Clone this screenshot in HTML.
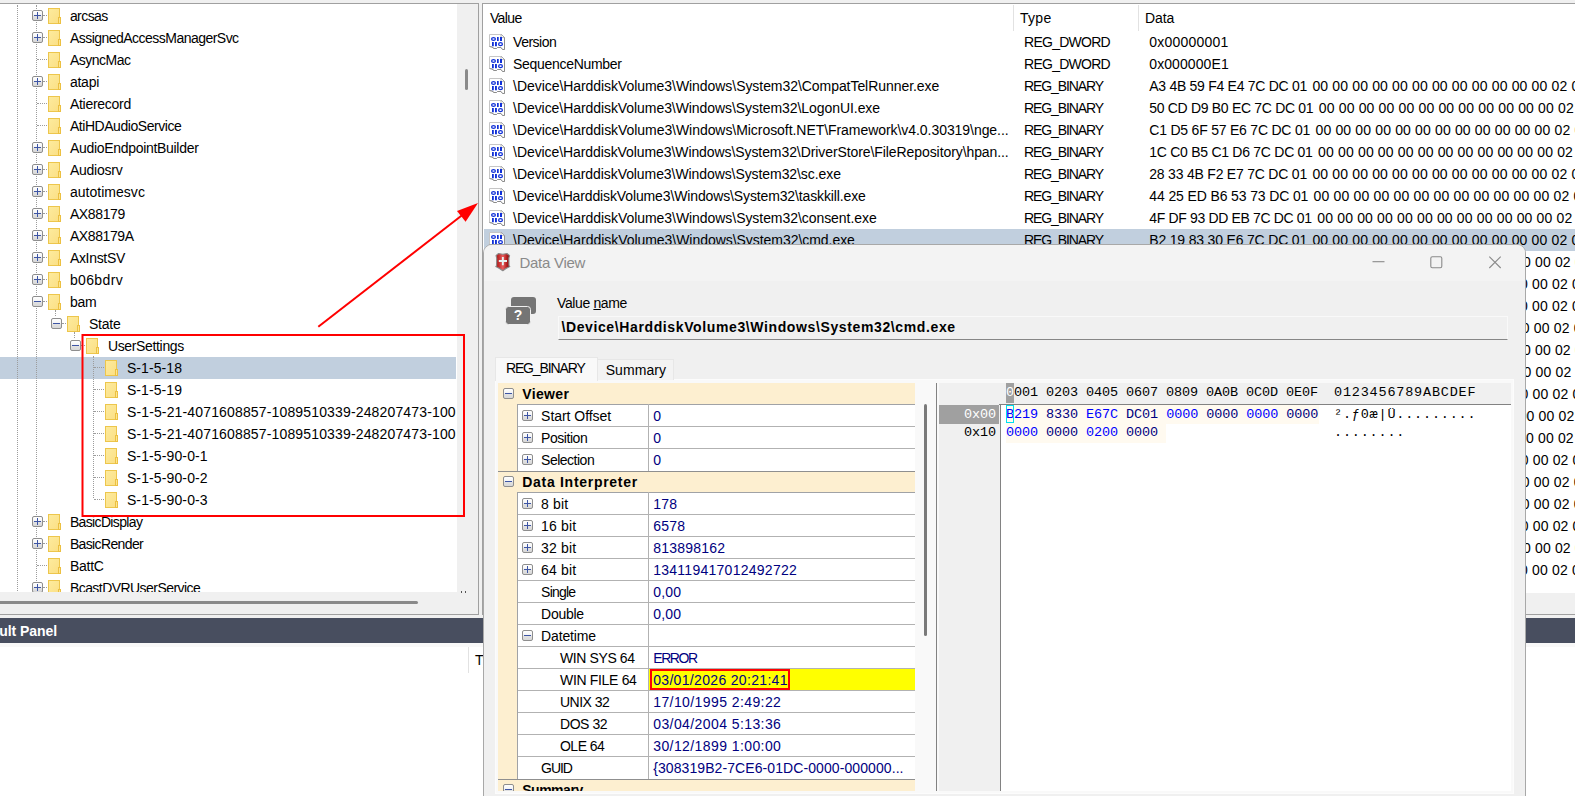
<!DOCTYPE html><html><head><meta charset="utf-8"><title>Data View</title><style>
*{box-sizing:border-box;margin:0;padding:0}
html,body{width:1575px;height:796px;overflow:hidden}
body{position:relative;background:#f0f0f0;font:14px "Liberation Sans",sans-serif;color:#000}
.a{position:absolute}
.t{position:absolute;white-space:pre;line-height:22px;height:22px}
.fold{position:absolute;width:13px;height:16px}
.box{position:absolute;width:11px;height:11px;border:1px solid #8e8e8e;border-radius:2px;background:linear-gradient(#fefefe 0%,#f3f3f3 48%,#e2e2e2 52%,#d8d8d8 100%)}
.box i{position:absolute;left:1px;top:4px;width:7px;height:1px;background:#3d55a5}
.box b{position:absolute;left:4px;top:1px;width:1px;height:7px;background:#3d55a5}
.hd{position:absolute;height:0;border-top:1px dotted #9c9c9c}
.vd{position:absolute;width:0;border-left:1px dotted #9c9c9c}
.ico{position:absolute;width:16px;height:16px}
.mono{font:13.5px "Liberation Mono",monospace;letter-spacing:-0.1px;white-space:pre;position:absolute;line-height:19px;height:19px}
</style></head><body>
<svg width="0" height="0" style="position:absolute"><defs>
<linearGradient id="fg" x1="0" y1="0" x2="1" y2="1"><stop offset="0" stop-color="#fdeb9e"/><stop offset="1" stop-color="#fbdf84"/></linearGradient>
</defs></svg>
<div class="a" style="left:0;top:3px;width:479px;height:612px;border:1px solid #a0a0a0;border-left:0;background:#f0f0f0"></div>
<div class="a" style="left:0;top:4px;width:457px;height:588px;background:#fff;overflow:hidden">
<div class="a" style="left:0px;top:353px;width:456px;height:22px;background:#c1cfde;"></div>
<div class="vd" style="left:17px;top:1px;height:588px"></div>
<div class="vd" style="left:36px;top:1px;height:588px"></div>
<div class="vd" style="left:55px;top:306px;height:6px"></div>
<div class="vd" style="left:74px;top:328px;height:6px"></div>
<div class="vd" style="left:93px;top:352px;height:142px"></div>
<div class="hd" style="left:43px;top:11px;width:4px"></div>
<div class="box" style="left:32px;top:6px"><i></i><b></b></div>
<svg class="fold" style="left:48px;top:4px" viewBox="0 0 13 16"><rect x="0.5" y="0.5" width="11" height="15" fill="url(#fg)" stroke="#edc64c"/><rect x="10.5" y="9.5" width="2" height="6" fill="#fde68f" stroke="#ecc042"/></svg>
<div class="t" style="left:69.90px;top:1.00px;letter-spacing:-0.570px;">arcsas</div>
<div class="hd" style="left:43px;top:33px;width:4px"></div>
<div class="box" style="left:32px;top:28px"><i></i><b></b></div>
<svg class="fold" style="left:48px;top:26px" viewBox="0 0 13 16"><rect x="0.5" y="0.5" width="11" height="15" fill="url(#fg)" stroke="#edc64c"/><rect x="10.5" y="9.5" width="2" height="6" fill="#fde68f" stroke="#ecc042"/></svg>
<div class="t" style="left:69.90px;top:23.00px;letter-spacing:-0.526px;">AssignedAccessManagerSvc</div>
<div class="hd" style="left:37px;top:55px;width:10px"></div>
<svg class="fold" style="left:48px;top:48px" viewBox="0 0 13 16"><rect x="0.5" y="0.5" width="11" height="15" fill="url(#fg)" stroke="#edc64c"/><rect x="10.5" y="9.5" width="2" height="6" fill="#fde68f" stroke="#ecc042"/></svg>
<div class="t" style="left:69.90px;top:45.00px;letter-spacing:-0.507px;">AsyncMac</div>
<div class="hd" style="left:43px;top:77px;width:4px"></div>
<div class="box" style="left:32px;top:72px"><i></i><b></b></div>
<svg class="fold" style="left:48px;top:70px" viewBox="0 0 13 16"><rect x="0.5" y="0.5" width="11" height="15" fill="url(#fg)" stroke="#edc64c"/><rect x="10.5" y="9.5" width="2" height="6" fill="#fde68f" stroke="#ecc042"/></svg>
<div class="t" style="left:69.90px;top:67.00px;letter-spacing:-0.238px;">atapi</div>
<div class="hd" style="left:37px;top:99px;width:10px"></div>
<svg class="fold" style="left:48px;top:92px" viewBox="0 0 13 16"><rect x="0.5" y="0.5" width="11" height="15" fill="url(#fg)" stroke="#edc64c"/><rect x="10.5" y="9.5" width="2" height="6" fill="#fde68f" stroke="#ecc042"/></svg>
<div class="t" style="left:69.90px;top:89.00px;letter-spacing:-0.267px;">Atierecord</div>
<div class="hd" style="left:37px;top:121px;width:10px"></div>
<svg class="fold" style="left:48px;top:114px" viewBox="0 0 13 16"><rect x="0.5" y="0.5" width="11" height="15" fill="url(#fg)" stroke="#edc64c"/><rect x="10.5" y="9.5" width="2" height="6" fill="#fde68f" stroke="#ecc042"/></svg>
<div class="t" style="left:69.90px;top:111.00px;letter-spacing:-0.447px;">AtiHDAudioService</div>
<div class="hd" style="left:43px;top:143px;width:4px"></div>
<div class="box" style="left:32px;top:138px"><i></i><b></b></div>
<svg class="fold" style="left:48px;top:136px" viewBox="0 0 13 16"><rect x="0.5" y="0.5" width="11" height="15" fill="url(#fg)" stroke="#edc64c"/><rect x="10.5" y="9.5" width="2" height="6" fill="#fde68f" stroke="#ecc042"/></svg>
<div class="t" style="left:69.90px;top:133.00px;letter-spacing:-0.303px;">AudioEndpointBuilder</div>
<div class="hd" style="left:43px;top:165px;width:4px"></div>
<div class="box" style="left:32px;top:160px"><i></i><b></b></div>
<svg class="fold" style="left:48px;top:158px" viewBox="0 0 13 16"><rect x="0.5" y="0.5" width="11" height="15" fill="url(#fg)" stroke="#edc64c"/><rect x="10.5" y="9.5" width="2" height="6" fill="#fde68f" stroke="#ecc042"/></svg>
<div class="t" style="left:69.90px;top:155.00px;letter-spacing:-0.236px;">Audiosrv</div>
<div class="hd" style="left:43px;top:187px;width:4px"></div>
<div class="box" style="left:32px;top:182px"><i></i><b></b></div>
<svg class="fold" style="left:48px;top:180px" viewBox="0 0 13 16"><rect x="0.5" y="0.5" width="11" height="15" fill="url(#fg)" stroke="#edc64c"/><rect x="10.5" y="9.5" width="2" height="6" fill="#fde68f" stroke="#ecc042"/></svg>
<div class="t" style="left:69.90px;top:177.00px;letter-spacing:0.030px;">autotimesvc</div>
<div class="hd" style="left:43px;top:209px;width:4px"></div>
<div class="box" style="left:32px;top:204px"><i></i><b></b></div>
<svg class="fold" style="left:48px;top:202px" viewBox="0 0 13 16"><rect x="0.5" y="0.5" width="11" height="15" fill="url(#fg)" stroke="#edc64c"/><rect x="10.5" y="9.5" width="2" height="6" fill="#fde68f" stroke="#ecc042"/></svg>
<div class="t" style="left:69.90px;top:199.00px;letter-spacing:-0.367px;">AX88179</div>
<div class="hd" style="left:43px;top:231px;width:4px"></div>
<div class="box" style="left:32px;top:226px"><i></i><b></b></div>
<svg class="fold" style="left:48px;top:224px" viewBox="0 0 13 16"><rect x="0.5" y="0.5" width="11" height="15" fill="url(#fg)" stroke="#edc64c"/><rect x="10.5" y="9.5" width="2" height="6" fill="#fde68f" stroke="#ecc042"/></svg>
<div class="t" style="left:69.90px;top:221.00px;letter-spacing:-0.407px;">AX88179A</div>
<div class="hd" style="left:43px;top:253px;width:4px"></div>
<div class="box" style="left:32px;top:248px"><i></i><b></b></div>
<svg class="fold" style="left:48px;top:246px" viewBox="0 0 13 16"><rect x="0.5" y="0.5" width="11" height="15" fill="url(#fg)" stroke="#edc64c"/><rect x="10.5" y="9.5" width="2" height="6" fill="#fde68f" stroke="#ecc042"/></svg>
<div class="t" style="left:69.90px;top:243.00px;letter-spacing:-0.314px;">AxInstSV</div>
<div class="hd" style="left:43px;top:275px;width:4px"></div>
<div class="box" style="left:32px;top:270px"><i></i><b></b></div>
<svg class="fold" style="left:48px;top:268px" viewBox="0 0 13 16"><rect x="0.5" y="0.5" width="11" height="15" fill="url(#fg)" stroke="#edc64c"/><rect x="10.5" y="9.5" width="2" height="6" fill="#fde68f" stroke="#ecc042"/></svg>
<div class="t" style="left:69.90px;top:265.00px;letter-spacing:0.367px;">b06bdrv</div>
<div class="hd" style="left:43px;top:297px;width:4px"></div>
<div class="box" style="left:32px;top:292px"><i></i></div>
<svg class="fold" style="left:48px;top:290px" viewBox="0 0 13 16"><rect x="0.5" y="0.5" width="11" height="15" fill="url(#fg)" stroke="#edc64c"/><rect x="10.5" y="9.5" width="2" height="6" fill="#fde68f" stroke="#ecc042"/></svg>
<div class="t" style="left:69.90px;top:287.00px;letter-spacing:-0.225px;">bam</div>
<div class="hd" style="left:62px;top:319px;width:4px"></div>
<div class="box" style="left:51px;top:314px"><i></i></div>
<svg class="fold" style="left:67px;top:312px" viewBox="0 0 13 16"><rect x="0.5" y="0.5" width="11" height="15" fill="url(#fg)" stroke="#edc64c"/><rect x="10.5" y="9.5" width="2" height="6" fill="#fde68f" stroke="#ecc042"/></svg>
<div class="t" style="left:88.90px;top:309.00px;letter-spacing:-0.200px;">State</div>
<div class="hd" style="left:81px;top:341px;width:4px"></div>
<div class="box" style="left:70px;top:336px"><i></i></div>
<svg class="fold" style="left:86px;top:334px" viewBox="0 0 13 16"><rect x="0.5" y="0.5" width="11" height="15" fill="url(#fg)" stroke="#edc64c"/><rect x="10.5" y="9.5" width="2" height="6" fill="#fde68f" stroke="#ecc042"/></svg>
<div class="t" style="left:107.90px;top:331.00px;letter-spacing:-0.341px;">UserSettings</div>
<div class="hd" style="left:94px;top:363px;width:10px"></div>
<svg class="fold" style="left:105px;top:356px" viewBox="0 0 13 16"><rect x="0.5" y="0.5" width="11" height="15" fill="url(#fg)" stroke="#edc64c"/><rect x="10.5" y="9.5" width="2" height="6" fill="#fde68f" stroke="#ecc042"/></svg>
<div class="t" style="left:126.90px;top:353.00px;letter-spacing:0.079px;">S-1-5-18</div>
<div class="hd" style="left:94px;top:385px;width:10px"></div>
<svg class="fold" style="left:105px;top:378px" viewBox="0 0 13 16"><rect x="0.5" y="0.5" width="11" height="15" fill="url(#fg)" stroke="#edc64c"/><rect x="10.5" y="9.5" width="2" height="6" fill="#fde68f" stroke="#ecc042"/></svg>
<div class="t" style="left:126.90px;top:375.00px;letter-spacing:0.079px;">S-1-5-19</div>
<div class="hd" style="left:94px;top:407px;width:10px"></div>
<svg class="fold" style="left:105px;top:400px" viewBox="0 0 13 16"><rect x="0.5" y="0.5" width="11" height="15" fill="url(#fg)" stroke="#edc64c"/><rect x="10.5" y="9.5" width="2" height="6" fill="#fde68f" stroke="#ecc042"/></svg>
<div class="t" style="left:126.90px;top:397.00px;letter-spacing:0.150px;">S-1-5-21-4071608857-1089510339-248207473-100</div>
<div class="hd" style="left:94px;top:429px;width:10px"></div>
<svg class="fold" style="left:105px;top:422px" viewBox="0 0 13 16"><rect x="0.5" y="0.5" width="11" height="15" fill="url(#fg)" stroke="#edc64c"/><rect x="10.5" y="9.5" width="2" height="6" fill="#fde68f" stroke="#ecc042"/></svg>
<div class="t" style="left:126.90px;top:419.00px;letter-spacing:0.150px;">S-1-5-21-4071608857-1089510339-248207473-100</div>
<div class="hd" style="left:94px;top:451px;width:10px"></div>
<svg class="fold" style="left:105px;top:444px" viewBox="0 0 13 16"><rect x="0.5" y="0.5" width="11" height="15" fill="url(#fg)" stroke="#edc64c"/><rect x="10.5" y="9.5" width="2" height="6" fill="#fde68f" stroke="#ecc042"/></svg>
<div class="t" style="left:126.90px;top:441.00px;letter-spacing:0.123px;">S-1-5-90-0-1</div>
<div class="hd" style="left:94px;top:473px;width:10px"></div>
<svg class="fold" style="left:105px;top:466px" viewBox="0 0 13 16"><rect x="0.5" y="0.5" width="11" height="15" fill="url(#fg)" stroke="#edc64c"/><rect x="10.5" y="9.5" width="2" height="6" fill="#fde68f" stroke="#ecc042"/></svg>
<div class="t" style="left:126.90px;top:463.00px;letter-spacing:0.123px;">S-1-5-90-0-2</div>
<div class="hd" style="left:94px;top:495px;width:10px"></div>
<svg class="fold" style="left:105px;top:488px" viewBox="0 0 13 16"><rect x="0.5" y="0.5" width="11" height="15" fill="url(#fg)" stroke="#edc64c"/><rect x="10.5" y="9.5" width="2" height="6" fill="#fde68f" stroke="#ecc042"/></svg>
<div class="t" style="left:126.90px;top:485.00px;letter-spacing:0.123px;">S-1-5-90-0-3</div>
<div class="hd" style="left:43px;top:517px;width:4px"></div>
<div class="box" style="left:32px;top:512px"><i></i><b></b></div>
<svg class="fold" style="left:48px;top:510px" viewBox="0 0 13 16"><rect x="0.5" y="0.5" width="11" height="15" fill="url(#fg)" stroke="#edc64c"/><rect x="10.5" y="9.5" width="2" height="6" fill="#fde68f" stroke="#ecc042"/></svg>
<div class="t" style="left:69.90px;top:507.00px;letter-spacing:-0.650px;">BasicDisplay</div>
<div class="hd" style="left:43px;top:539px;width:4px"></div>
<div class="box" style="left:32px;top:534px"><i></i><b></b></div>
<svg class="fold" style="left:48px;top:532px" viewBox="0 0 13 16"><rect x="0.5" y="0.5" width="11" height="15" fill="url(#fg)" stroke="#edc64c"/><rect x="10.5" y="9.5" width="2" height="6" fill="#fde68f" stroke="#ecc042"/></svg>
<div class="t" style="left:69.90px;top:529.00px;letter-spacing:-0.635px;">BasicRender</div>
<div class="hd" style="left:37px;top:561px;width:10px"></div>
<svg class="fold" style="left:48px;top:554px" viewBox="0 0 13 16"><rect x="0.5" y="0.5" width="11" height="15" fill="url(#fg)" stroke="#edc64c"/><rect x="10.5" y="9.5" width="2" height="6" fill="#fde68f" stroke="#ecc042"/></svg>
<div class="t" style="left:69.90px;top:551.00px;letter-spacing:-0.250px;">BattC</div>
<div class="hd" style="left:43px;top:583px;width:4px"></div>
<div class="box" style="left:32px;top:578px"><i></i><b></b></div>
<svg class="fold" style="left:48px;top:576px" viewBox="0 0 13 16"><rect x="0.5" y="0.5" width="11" height="15" fill="url(#fg)" stroke="#edc64c"/><rect x="10.5" y="9.5" width="2" height="6" fill="#fde68f" stroke="#ecc042"/></svg>
<div class="t" style="left:69.90px;top:573.00px;letter-spacing:-0.550px;">BcastDVRUserService</div>
</div>
<div class="a" style="left:465px;top:69px;width:3px;height:21px;background:#8a8a8a;border-radius:2px"></div>
<div class="a" style="left:-3px;top:601px;width:421px;height:3px;background:#8a8a8a;border-radius:2px"></div>
<div class="a" style="left:461px;top:591px;width:1px;height:2px;background:#555;"></div>
<div class="a" style="left:465px;top:591px;width:1px;height:2px;background:#555;"></div>
<div class="a" style="left:482px;top:3px;width:1100px;height:612px;border:1px solid #a0a0a0;background:#f0f0f0"></div>
<div class="a" style="left:483px;top:4px;width:1092px;height:589px;background:#fff;overflow:hidden">
<div class="t" style="left:6.90px;top:3.00px;letter-spacing:-0.612px;">Value</div>
<div class="a" style="left:530px;top:1px;width:1px;height:26px;background:#e2e2e2;"></div>
<div class="a" style="left:655px;top:1px;width:1px;height:26px;background:#e2e2e2;"></div>
<div class="t" style="left:537.00px;top:3.00px;letter-spacing:0.283px;">Type</div>
<div class="t" style="left:662.10px;top:3.00px;letter-spacing:-0.167px;">Data</div>
<svg class="ico" style="left:6px;top:30px" viewBox="0 0 16 16"><path d="M0.5 0.5H12L15.5 3.5V15.5H13.5L12 13.5H8.5L7.5 14.5H5L3 13L0.5 12.5Z" fill="#fff" stroke="#c6c6c6" stroke-width="1"/><path d="M12 0.5L15.5 3.5V15.5H13.5L12 13.5H8.5L7.5 14.5H5L3 13L0.5 12.5" fill="none" stroke="#8c8c8c" stroke-width="1"/><path d="M12 0.8V3.6H15.2" fill="#fff" stroke="#aaa" stroke-width="0.8"/>
<g fill="none" stroke="#1030d8" stroke-width="1.25"><ellipse cx="4.5" cy="4.9" rx="1.9" ry="1.4"/><ellipse cx="11.5" cy="10.15" rx="1.9" ry="1.45"/></g>
<path d="M8 3h1.7v4H8zM11 3h2v4h-2zM3 8.1h1.8v4.1H3zM6 8.1h1.9v4.1H6z" fill="#1030d8"/></svg>
<div class="t" style="left:30.10px;top:27.00px;letter-spacing:-0.517px;">Version</div>
<div class="t" style="left:541.10px;top:27.00px;letter-spacing:-0.744px;">REG_DWORD</div>
<div class="t" style="left:666.30px;top:27.00px;letter-spacing:0.206px;">0x00000001</div>
<svg class="ico" style="left:6px;top:52px" viewBox="0 0 16 16"><path d="M0.5 0.5H12L15.5 3.5V15.5H13.5L12 13.5H8.5L7.5 14.5H5L3 13L0.5 12.5Z" fill="#fff" stroke="#c6c6c6" stroke-width="1"/><path d="M12 0.5L15.5 3.5V15.5H13.5L12 13.5H8.5L7.5 14.5H5L3 13L0.5 12.5" fill="none" stroke="#8c8c8c" stroke-width="1"/><path d="M12 0.8V3.6H15.2" fill="#fff" stroke="#aaa" stroke-width="0.8"/>
<g fill="none" stroke="#1030d8" stroke-width="1.25"><ellipse cx="4.5" cy="4.9" rx="1.9" ry="1.4"/><ellipse cx="11.5" cy="10.15" rx="1.9" ry="1.45"/></g>
<path d="M8 3h1.7v4H8zM11 3h2v4h-2zM3 8.1h1.8v4.1H3zM6 8.1h1.9v4.1H6z" fill="#1030d8"/></svg>
<div class="t" style="left:30.10px;top:49.00px;letter-spacing:-0.312px;">SequenceNumber</div>
<div class="t" style="left:541.10px;top:49.00px;letter-spacing:-0.744px;">REG_DWORD</div>
<div class="t" style="left:666.30px;top:49.00px;letter-spacing:0.083px;">0x000000E1</div>
<svg class="ico" style="left:6px;top:74px" viewBox="0 0 16 16"><path d="M0.5 0.5H12L15.5 3.5V15.5H13.5L12 13.5H8.5L7.5 14.5H5L3 13L0.5 12.5Z" fill="#fff" stroke="#c6c6c6" stroke-width="1"/><path d="M12 0.5L15.5 3.5V15.5H13.5L12 13.5H8.5L7.5 14.5H5L3 13L0.5 12.5" fill="none" stroke="#8c8c8c" stroke-width="1"/><path d="M12 0.8V3.6H15.2" fill="#fff" stroke="#aaa" stroke-width="0.8"/>
<g fill="none" stroke="#1030d8" stroke-width="1.25"><ellipse cx="4.5" cy="4.9" rx="1.9" ry="1.4"/><ellipse cx="11.5" cy="10.15" rx="1.9" ry="1.45"/></g>
<path d="M8 3h1.7v4H8zM11 3h2v4h-2zM3 8.1h1.8v4.1H3zM6 8.1h1.9v4.1H6z" fill="#1030d8"/></svg>
<div class="t" style="left:30.10px;top:71.00px;letter-spacing:-0.057px;">\Device\HarddiskVolume3\Windows\System32\CompatTelRunner.exe</div>
<div class="t" style="left:541.10px;top:71.00px;letter-spacing:-1.111px;">REG_BINARY</div>
<div class="t" style="left:666.30px;top:71.00px;letter-spacing:-0.286px;">A3 4B 59 F4 E4 7C DC 01</div>
<div class="t" style="left:829.40px;top:71.00px;letter-spacing:0.154px;">00 00 00 00 00 00 00 00 00 00 00 00 02 00 00 00</div>
<svg class="ico" style="left:6px;top:96px" viewBox="0 0 16 16"><path d="M0.5 0.5H12L15.5 3.5V15.5H13.5L12 13.5H8.5L7.5 14.5H5L3 13L0.5 12.5Z" fill="#fff" stroke="#c6c6c6" stroke-width="1"/><path d="M12 0.5L15.5 3.5V15.5H13.5L12 13.5H8.5L7.5 14.5H5L3 13L0.5 12.5" fill="none" stroke="#8c8c8c" stroke-width="1"/><path d="M12 0.8V3.6H15.2" fill="#fff" stroke="#aaa" stroke-width="0.8"/>
<g fill="none" stroke="#1030d8" stroke-width="1.25"><ellipse cx="4.5" cy="4.9" rx="1.9" ry="1.4"/><ellipse cx="11.5" cy="10.15" rx="1.9" ry="1.45"/></g>
<path d="M8 3h1.7v4H8zM11 3h2v4h-2zM3 8.1h1.8v4.1H3zM6 8.1h1.9v4.1H6z" fill="#1030d8"/></svg>
<div class="t" style="left:30.10px;top:93.00px;letter-spacing:-0.067px;">\Device\HarddiskVolume3\Windows\System32\LogonUI.exe</div>
<div class="t" style="left:541.10px;top:93.00px;letter-spacing:-1.111px;">REG_BINARY</div>
<div class="t" style="left:666.30px;top:93.00px;letter-spacing:-0.314px;">50 CD D9 B0 EC 7C DC 01</div>
<div class="t" style="left:835.80px;top:93.00px;letter-spacing:0.157px;">00 00 00 00 00 00 00 00 00 00 00 00 02 00 00 00</div>
<svg class="ico" style="left:6px;top:118px" viewBox="0 0 16 16"><path d="M0.5 0.5H12L15.5 3.5V15.5H13.5L12 13.5H8.5L7.5 14.5H5L3 13L0.5 12.5Z" fill="#fff" stroke="#c6c6c6" stroke-width="1"/><path d="M12 0.5L15.5 3.5V15.5H13.5L12 13.5H8.5L7.5 14.5H5L3 13L0.5 12.5" fill="none" stroke="#8c8c8c" stroke-width="1"/><path d="M12 0.8V3.6H15.2" fill="#fff" stroke="#aaa" stroke-width="0.8"/>
<g fill="none" stroke="#1030d8" stroke-width="1.25"><ellipse cx="4.5" cy="4.9" rx="1.9" ry="1.4"/><ellipse cx="11.5" cy="10.15" rx="1.9" ry="1.45"/></g>
<path d="M8 3h1.7v4H8zM11 3h2v4h-2zM3 8.1h1.8v4.1H3zM6 8.1h1.9v4.1H6z" fill="#1030d8"/></svg>
<div class="t" style="left:30.10px;top:115.00px;letter-spacing:-0.055px;">\Device\HarddiskVolume3\Windows\Microsoft.NET\Framework\v4.0.30319\nge...</div>
<div class="t" style="left:541.10px;top:115.00px;letter-spacing:-1.111px;">REG_BINARY</div>
<div class="t" style="left:666.30px;top:115.00px;letter-spacing:-0.216px;">C1 D5 6F 57 E6 7C DC 01</div>
<div class="t" style="left:832.50px;top:115.00px;letter-spacing:0.151px;">00 00 00 00 00 00 00 00 00 00 00 00 02 00 00 00</div>
<svg class="ico" style="left:6px;top:140px" viewBox="0 0 16 16"><path d="M0.5 0.5H12L15.5 3.5V15.5H13.5L12 13.5H8.5L7.5 14.5H5L3 13L0.5 12.5Z" fill="#fff" stroke="#c6c6c6" stroke-width="1"/><path d="M12 0.5L15.5 3.5V15.5H13.5L12 13.5H8.5L7.5 14.5H5L3 13L0.5 12.5" fill="none" stroke="#8c8c8c" stroke-width="1"/><path d="M12 0.8V3.6H15.2" fill="#fff" stroke="#aaa" stroke-width="0.8"/>
<g fill="none" stroke="#1030d8" stroke-width="1.25"><ellipse cx="4.5" cy="4.9" rx="1.9" ry="1.4"/><ellipse cx="11.5" cy="10.15" rx="1.9" ry="1.45"/></g>
<path d="M8 3h1.7v4H8zM11 3h2v4h-2zM3 8.1h1.8v4.1H3zM6 8.1h1.9v4.1H6z" fill="#1030d8"/></svg>
<div class="t" style="left:30.10px;top:137.00px;letter-spacing:-0.084px;">\Device\HarddiskVolume3\Windows\System32\DriverStore\FileRepository\hpan...</div>
<div class="t" style="left:541.10px;top:137.00px;letter-spacing:-1.111px;">REG_BINARY</div>
<div class="t" style="left:666.30px;top:137.00px;letter-spacing:-0.275px;">1C C0 B5 C1 D6 7C DC 01</div>
<div class="t" style="left:835.10px;top:137.00px;letter-spacing:0.154px;">00 00 00 00 00 00 00 00 00 00 00 00 02 00 00 00</div>
<svg class="ico" style="left:6px;top:162px" viewBox="0 0 16 16"><path d="M0.5 0.5H12L15.5 3.5V15.5H13.5L12 13.5H8.5L7.5 14.5H5L3 13L0.5 12.5Z" fill="#fff" stroke="#c6c6c6" stroke-width="1"/><path d="M12 0.5L15.5 3.5V15.5H13.5L12 13.5H8.5L7.5 14.5H5L3 13L0.5 12.5" fill="none" stroke="#8c8c8c" stroke-width="1"/><path d="M12 0.8V3.6H15.2" fill="#fff" stroke="#aaa" stroke-width="0.8"/>
<g fill="none" stroke="#1030d8" stroke-width="1.25"><ellipse cx="4.5" cy="4.9" rx="1.9" ry="1.4"/><ellipse cx="11.5" cy="10.15" rx="1.9" ry="1.45"/></g>
<path d="M8 3h1.7v4H8zM11 3h2v4h-2zM3 8.1h1.8v4.1H3zM6 8.1h1.9v4.1H6z" fill="#1030d8"/></svg>
<div class="t" style="left:30.10px;top:159.00px;letter-spacing:-0.079px;">\Device\HarddiskVolume3\Windows\System32\sc.exe</div>
<div class="t" style="left:541.10px;top:159.00px;letter-spacing:-1.111px;">REG_BINARY</div>
<div class="t" style="left:666.30px;top:159.00px;letter-spacing:-0.216px;">28 33 4B F2 E7 7C DC 01</div>
<div class="t" style="left:829.40px;top:159.00px;letter-spacing:0.154px;">00 00 00 00 00 00 00 00 00 00 00 00 02 00 00 00</div>
<svg class="ico" style="left:6px;top:184px" viewBox="0 0 16 16"><path d="M0.5 0.5H12L15.5 3.5V15.5H13.5L12 13.5H8.5L7.5 14.5H5L3 13L0.5 12.5Z" fill="#fff" stroke="#c6c6c6" stroke-width="1"/><path d="M12 0.5L15.5 3.5V15.5H13.5L12 13.5H8.5L7.5 14.5H5L3 13L0.5 12.5" fill="none" stroke="#8c8c8c" stroke-width="1"/><path d="M12 0.8V3.6H15.2" fill="#fff" stroke="#aaa" stroke-width="0.8"/>
<g fill="none" stroke="#1030d8" stroke-width="1.25"><ellipse cx="4.5" cy="4.9" rx="1.9" ry="1.4"/><ellipse cx="11.5" cy="10.15" rx="1.9" ry="1.45"/></g>
<path d="M8 3h1.7v4H8zM11 3h2v4h-2zM3 8.1h1.8v4.1H3zM6 8.1h1.9v4.1H6z" fill="#1030d8"/></svg>
<div class="t" style="left:30.10px;top:181.00px;letter-spacing:-0.130px;">\Device\HarddiskVolume3\Windows\System32\taskkill.exe</div>
<div class="t" style="left:541.10px;top:181.00px;letter-spacing:-1.111px;">REG_BINARY</div>
<div class="t" style="left:666.30px;top:181.00px;letter-spacing:-0.127px;">44 25 ED B6 53 73 DC 01</div>
<div class="t" style="left:830.60px;top:181.00px;letter-spacing:0.176px;">00 00 00 00 00 00 00 00 00 00 00 00 02 00 00 00</div>
<svg class="ico" style="left:6px;top:206px" viewBox="0 0 16 16"><path d="M0.5 0.5H12L15.5 3.5V15.5H13.5L12 13.5H8.5L7.5 14.5H5L3 13L0.5 12.5Z" fill="#fff" stroke="#c6c6c6" stroke-width="1"/><path d="M12 0.5L15.5 3.5V15.5H13.5L12 13.5H8.5L7.5 14.5H5L3 13L0.5 12.5" fill="none" stroke="#8c8c8c" stroke-width="1"/><path d="M12 0.8V3.6H15.2" fill="#fff" stroke="#aaa" stroke-width="0.8"/>
<g fill="none" stroke="#1030d8" stroke-width="1.25"><ellipse cx="4.5" cy="4.9" rx="1.9" ry="1.4"/><ellipse cx="11.5" cy="10.15" rx="1.9" ry="1.45"/></g>
<path d="M8 3h1.7v4H8zM11 3h2v4h-2zM3 8.1h1.8v4.1H3zM6 8.1h1.9v4.1H6z" fill="#1030d8"/></svg>
<div class="t" style="left:30.10px;top:203.00px;letter-spacing:-0.057px;">\Device\HarddiskVolume3\Windows\System32\consent.exe</div>
<div class="t" style="left:541.10px;top:203.00px;letter-spacing:-1.111px;">REG_BINARY</div>
<div class="t" style="left:666.30px;top:203.00px;letter-spacing:-0.345px;">4F DF 93 DD EB 7C DC 01</div>
<div class="t" style="left:834.30px;top:203.00px;letter-spacing:0.157px;">00 00 00 00 00 00 00 00 00 00 00 00 02 00 00 00</div>
<div class="a" style="left:1px;top:225px;width:1092px;height:22px;background:#c1cfde;"></div>
<svg class="ico" style="left:6px;top:228px" viewBox="0 0 16 16"><path d="M0.5 0.5H12L15.5 3.5V15.5H13.5L12 13.5H8.5L7.5 14.5H5L3 13L0.5 12.5Z" fill="#fff" stroke="#c6c6c6" stroke-width="1"/><path d="M12 0.5L15.5 3.5V15.5H13.5L12 13.5H8.5L7.5 14.5H5L3 13L0.5 12.5" fill="none" stroke="#8c8c8c" stroke-width="1"/><path d="M12 0.8V3.6H15.2" fill="#fff" stroke="#aaa" stroke-width="0.8"/>
<g fill="none" stroke="#1030d8" stroke-width="1.25"><ellipse cx="4.5" cy="4.9" rx="1.9" ry="1.4"/><ellipse cx="11.5" cy="10.15" rx="1.9" ry="1.45"/></g>
<path d="M8 3h1.7v4H8zM11 3h2v4h-2zM3 8.1h1.8v4.1H3zM6 8.1h1.9v4.1H6z" fill="#1030d8"/></svg>
<div class="t" style="left:30.10px;top:225.00px;letter-spacing:-0.045px;">\Device\HarddiskVolume3\Windows\System32\cmd.exe</div>
<div class="t" style="left:541.10px;top:225.00px;letter-spacing:-1.111px;">REG_BINARY</div>
<div class="t" style="left:666.30px;top:225.00px;letter-spacing:-0.182px;">B2 19 83 30 E6 7C DC 01</div>
<div class="t" style="left:829.40px;top:225.00px;letter-spacing:0.154px;">00 00 00 00 00 00 00 00 00 00 00 00 02 00 00 00</div>
<div class="t" style="left:832.80px;top:247.00px;letter-spacing:0.154px;">00 00 00 00 00 00 00 00 00 00 00 00 02 00 00 00</div>
<div class="t" style="left:829.90px;top:269.00px;letter-spacing:0.154px;">00 00 00 00 00 00 00 00 00 00 00 00 02 00 00 00</div>
<div class="t" style="left:829.90px;top:291.00px;letter-spacing:0.154px;">00 00 00 00 00 00 00 00 00 00 00 00 02 00 00 00</div>
<div class="t" style="left:831.70px;top:313.00px;letter-spacing:0.154px;">00 00 00 00 00 00 00 00 00 00 00 00 02 00 00 00</div>
<div class="t" style="left:832.80px;top:335.00px;letter-spacing:0.154px;">00 00 00 00 00 00 00 00 00 00 00 00 02 00 00 00</div>
<div class="t" style="left:833.40px;top:357.00px;letter-spacing:0.154px;">00 00 00 00 00 00 00 00 00 00 00 00 02 00 00 00</div>
<div class="t" style="left:830.40px;top:379.00px;letter-spacing:0.154px;">00 00 00 00 00 00 00 00 00 00 00 00 02 00 00 00</div>
<div class="t" style="left:836.40px;top:401.00px;letter-spacing:0.154px;">00 00 00 00 00 00 00 00 00 00 00 00 02 00 00 00</div>
<div class="t" style="left:835.80px;top:423.00px;letter-spacing:0.154px;">00 00 00 00 00 00 00 00 00 00 00 00 02 00 00 00</div>
<div class="t" style="left:830.60px;top:445.00px;letter-spacing:0.154px;">00 00 00 00 00 00 00 00 00 00 00 00 02 00 00 00</div>
<div class="t" style="left:831.70px;top:467.00px;letter-spacing:0.154px;">00 00 00 00 00 00 00 00 00 00 00 00 02 00 00 00</div>
<div class="t" style="left:831.70px;top:489.00px;letter-spacing:0.154px;">00 00 00 00 00 00 00 00 00 00 00 00 02 00 00 00</div>
<div class="t" style="left:830.60px;top:511.00px;letter-spacing:0.154px;">00 00 00 00 00 00 00 00 00 00 00 00 02 00 00 00</div>
<div class="t" style="left:832.80px;top:533.00px;letter-spacing:0.154px;">00 00 00 00 00 00 00 00 00 00 00 00 02 00 00 00</div>
<div class="t" style="left:829.90px;top:555.00px;letter-spacing:0.154px;">00 00 00 00 00 00 00 00 00 00 00 00 02 00 00 00</div>
</div>
<div class="a" style="left:0px;top:618px;width:1575px;height:25px;background:#484e5f;"></div>
<div class="t" style="left:-0.80px;top:620.00px;letter-spacing:-0.044px;font-weight:bold;color:#fff;">ult Panel</div>
<div class="a" style="left:0px;top:643px;width:1575px;height:4px;background:#f8f8f8;"></div>
<div class="a" style="left:0px;top:647px;width:1575px;height:149px;background:#fff;"></div>
<div class="a" style="left:468px;top:647px;width:1px;height:26px;background:#e2e2e2;"></div>
<div class="t" style="left:475.00px;top:649.00px;letter-spacing:0.283px;">Type</div>
<svg class="a" style="left:0;top:0" width="500" height="600"><rect x="82.5" y="335" width="381.5" height="181" fill="none" stroke="#ff0000" stroke-width="2"/>
<line x1="318.3" y1="326.8" x2="463" y2="214.5" stroke="#ff0000" stroke-width="2"/><path d="M478 203L457 211L465.6 221.8Z" fill="#ff0000"/></svg>
<div class="a" style="left:483px;top:244px;width:1043px;height:560px;border:1px solid #a8a8a8;border-radius:9px 9px 0 0;background:#f0f0f0;overflow:hidden">
<div class="a" style="left:0px;top:0px;width:1041px;height:36px;background:#f3f3f3;"></div>
<svg class="a" style="left:9px;top:6px" width="20" height="22" viewBox="493 251 20 22"><defs><linearGradient id="sg" x1="0" x2="1"><stop offset="0" stop-color="#9c1414"/><stop offset="0.18" stop-color="#c02828"/><stop offset="0.5" stop-color="#e86060"/><stop offset="0.8" stop-color="#b01c1c"/><stop offset="1" stop-color="#7c0808"/></linearGradient></defs>
<path d="M498.5 253.5L502.8 254.2L507 253.5L509.6 255.6L508.9 258L509 265.5L509.8 266.5L506 268.5L502.8 270.8L499.5 268.5L495.8 266.5L496.6 265.5L496.7 258L496 255.6Z" fill="url(#sg)" stroke="#8a8a8a" stroke-width="1.1" stroke-linejoin="round"/>
<path d="M501.9 257h1.9v3h3.2v2h-3.2v3.2h-1.9v-3.2h-3.1v-2h3.1z" fill="#e6f2f2"/></svg>
<div class="t" style="left:35.50px;top:6.50px;letter-spacing:-0.281px;font-size:15px;color:#8a8a8a;">Data View</div>
<svg class="a" style="left:880px;top:5px" width="150" height="24"><g fill="none" stroke="#8a8a8a" stroke-width="1.1">
<path d="M8.5 11.7H20.5"/><rect x="66.8" y="6.8" width="11" height="11" rx="1.5"/><path d="M125.3 6.6L136.7 18M136.7 6.6L125.3 18"/></g></svg>
<div class="a" style="left:27px;top:52px;width:25px;height:17px;background:#757575;border-radius:3px"></div>
<div class="a" style="left:21px;top:61px;width:26px;height:19px;background:#757575;border:1px solid #f0f0f0;border-radius:3.5px;color:#fff;font:bold 14px/17px 'Liberation Sans',sans-serif;text-align:center">?</div>
<div class="t" style="left:73.00px;top:47.00px;letter-spacing:-0.378px;">Value <u>n</u>ame</div>
<div class="a" style="left:74px;top:71px;width:950px;height:24px;background:#f0f0f0;border:1px solid #f9f9f9;border-bottom:1px solid #868686"></div>
<div class="t" style="left:77.40px;top:71.40px;letter-spacing:0.620px;font-weight:bold;">\Device\HarddiskVolume3\Windows\System32\cmd.exe</div>
<div class="a" style="left:11px;top:134px;width:1019px;height:415px;background:#f9f9f9;border:1px solid #fcfcfc"></div>
<div class="a" style="left:113px;top:114px;width:77px;height:21px;background:#f3f3f3;border:1px solid #e7e7e7;border-bottom:0"></div>
<div class="t" style="left:121.70px;top:114.00px;letter-spacing:0.067px;">Summary</div>
<div class="a" style="left:11px;top:112px;width:103px;height:24px;background:#f9f9f9;border:1px solid #e7e7e7;border-bottom:0"></div>
<div class="t" style="left:21.90px;top:112.00px;letter-spacing:-1.122px;">REG_BINARY</div>
<div class="a" style="left:14px;top:138px;width:417px;height:408px;background:#fdefd0;overflow:hidden">
<div class="box" style="left:5px;top:5px"><i></i></div>
<div class="t" style="left:24.20px;top:0.00px;letter-spacing:0.380px;font-weight:bold;">Viewer</div>
<div class="a" style="left:19px;top:21px;width:398px;height:1px;background:#a0a2a6;"></div>
<div class="a" style="left:20px;top:22px;width:397px;height:21px;background:#fff;"></div>
<div class="box" style="left:24px;top:27px"><i></i><b></b></div>
<div class="t" style="left:43.10px;top:22.00px;letter-spacing:-0.041px;">Start Offset</div>
<div class="t" style="left:155.20px;top:22.00px;color:#000080;">0</div>
<div class="a" style="left:19px;top:43px;width:398px;height:1px;background:#b2b2b2;"></div>
<div class="a" style="left:20px;top:44px;width:397px;height:21px;background:#fff;"></div>
<div class="box" style="left:24px;top:49px"><i></i><b></b></div>
<div class="t" style="left:43.10px;top:44.00px;letter-spacing:-0.457px;">Position</div>
<div class="t" style="left:155.20px;top:44.00px;color:#000080;">0</div>
<div class="a" style="left:19px;top:65px;width:398px;height:1px;background:#b2b2b2;"></div>
<div class="a" style="left:20px;top:66px;width:397px;height:21px;background:#fff;"></div>
<div class="box" style="left:24px;top:71px"><i></i><b></b></div>
<div class="t" style="left:43.10px;top:66.00px;letter-spacing:-0.500px;">Selection</div>
<div class="t" style="left:155.20px;top:66.00px;color:#000080;">0</div>
<div class="a" style="left:19px;top:87px;width:398px;height:1px;background:#b2b2b2;"></div>
<div class="a" style="left:20px;top:87px;width:397px;height:1px;background:#fff;"></div>
<div class="a" style="left:19px;top:21px;width:1px;height:67px;background:#a0a2a6;"></div>
<div class="a" style="left:0px;top:88px;width:417px;height:1px;background:#8f8f8f;"></div>
<div class="box" style="left:5px;top:93px"><i></i></div>
<div class="t" style="left:24.20px;top:88.00px;letter-spacing:0.717px;font-weight:bold;">Data Interpreter</div>
<div class="a" style="left:19px;top:109px;width:398px;height:1px;background:#a0a2a6;"></div>
<div class="a" style="left:20px;top:110px;width:397px;height:21px;background:#fff;"></div>
<div class="box" style="left:24px;top:115px"><i></i><b></b></div>
<div class="t" style="left:43.10px;top:110.00px;letter-spacing:0.138px;">8 bit</div>
<div class="t" style="left:155.20px;top:110.00px;letter-spacing:0.225px;color:#000080;">178</div>
<div class="a" style="left:19px;top:131px;width:398px;height:1px;background:#b2b2b2;"></div>
<div class="a" style="left:20px;top:132px;width:397px;height:21px;background:#fff;"></div>
<div class="box" style="left:24px;top:137px"><i></i><b></b></div>
<div class="t" style="left:43.10px;top:132.00px;letter-spacing:0.150px;">16 bit</div>
<div class="t" style="left:155.20px;top:132.00px;letter-spacing:0.217px;color:#000080;">6578</div>
<div class="a" style="left:19px;top:153px;width:398px;height:1px;background:#b2b2b2;"></div>
<div class="a" style="left:20px;top:154px;width:397px;height:21px;background:#fff;"></div>
<div class="box" style="left:24px;top:159px"><i></i><b></b></div>
<div class="t" style="left:43.10px;top:154.00px;letter-spacing:0.150px;">32 bit</div>
<div class="t" style="left:155.20px;top:154.00px;letter-spacing:0.219px;color:#000080;">813898162</div>
<div class="a" style="left:19px;top:175px;width:398px;height:1px;background:#b2b2b2;"></div>
<div class="a" style="left:20px;top:176px;width:397px;height:21px;background:#fff;"></div>
<div class="box" style="left:24px;top:181px"><i></i><b></b></div>
<div class="t" style="left:43.10px;top:176.00px;letter-spacing:0.150px;">64 bit</div>
<div class="t" style="left:155.20px;top:176.00px;letter-spacing:0.265px;color:#000080;">134119417012492722</div>
<div class="a" style="left:19px;top:197px;width:398px;height:1px;background:#b2b2b2;"></div>
<div class="a" style="left:20px;top:198px;width:397px;height:21px;background:#fff;"></div>
<div class="t" style="left:43.10px;top:198.00px;letter-spacing:-0.780px;">Single</div>
<div class="t" style="left:155.20px;top:198.00px;letter-spacing:0.183px;color:#000080;">0,00</div>
<div class="a" style="left:19px;top:219px;width:398px;height:1px;background:#b2b2b2;"></div>
<div class="a" style="left:20px;top:220px;width:397px;height:21px;background:#fff;"></div>
<div class="t" style="left:43.10px;top:220.00px;letter-spacing:-0.270px;">Double</div>
<div class="t" style="left:155.20px;top:220.00px;letter-spacing:0.183px;color:#000080;">0,00</div>
<div class="a" style="left:19px;top:241px;width:398px;height:1px;background:#b2b2b2;"></div>
<div class="a" style="left:20px;top:242px;width:397px;height:21px;background:#fff;"></div>
<div class="box" style="left:24px;top:247px"><i></i></div>
<div class="t" style="left:43.10px;top:242.00px;letter-spacing:-0.143px;">Datetime</div>
<div class="a" style="left:19px;top:263px;width:398px;height:1px;background:#b2b2b2;"></div>
<div class="a" style="left:20px;top:264px;width:397px;height:21px;background:#fff;"></div>
<div class="t" style="left:62.00px;top:264.00px;letter-spacing:-0.400px;">WIN SYS 64</div>
<div class="t" style="left:155.20px;top:264.00px;letter-spacing:-1.387px;color:#000080;">ERROR</div>
<div class="a" style="left:19px;top:285px;width:398px;height:1px;background:#b2b2b2;"></div>
<div class="a" style="left:20px;top:286px;width:397px;height:21px;background:#fff;"></div>
<div class="a" style="left:151px;top:286px;width:266px;height:21px;background:#ffff00;"></div>
<div class="a" style="left:152px;top:286px;width:140px;height:21px;background:transparent;border:2px solid #ff0000"></div>
<div class="t" style="left:62.00px;top:286.00px;letter-spacing:-0.325px;">WIN FILE 64</div>
<div class="t" style="left:155.20px;top:286.00px;letter-spacing:0.325px;color:#000080;">03/01/2026 20:21:41</div>
<div class="a" style="left:19px;top:307px;width:398px;height:1px;background:#b2b2b2;"></div>
<div class="a" style="left:20px;top:308px;width:397px;height:21px;background:#fff;"></div>
<div class="t" style="left:62.00px;top:308.00px;letter-spacing:-0.533px;">UNIX 32</div>
<div class="t" style="left:155.20px;top:308.00px;letter-spacing:0.415px;color:#000080;">17/10/1995 2:49:22</div>
<div class="a" style="left:19px;top:329px;width:398px;height:1px;background:#b2b2b2;"></div>
<div class="a" style="left:20px;top:330px;width:397px;height:21px;background:#fff;"></div>
<div class="t" style="left:62.00px;top:330.00px;letter-spacing:-0.460px;">DOS 32</div>
<div class="t" style="left:155.20px;top:330.00px;letter-spacing:0.415px;color:#000080;">03/04/2004 5:13:36</div>
<div class="a" style="left:19px;top:351px;width:398px;height:1px;background:#b2b2b2;"></div>
<div class="a" style="left:20px;top:352px;width:397px;height:21px;background:#fff;"></div>
<div class="t" style="left:62.00px;top:352.00px;letter-spacing:-0.520px;">OLE 64</div>
<div class="t" style="left:155.20px;top:352.00px;letter-spacing:0.415px;color:#000080;">30/12/1899 1:00:00</div>
<div class="a" style="left:19px;top:373px;width:398px;height:1px;background:#b2b2b2;"></div>
<div class="a" style="left:20px;top:374px;width:397px;height:21px;background:#fff;"></div>
<div class="t" style="left:43.10px;top:374.00px;letter-spacing:-1.067px;">GUID</div>
<div class="t" style="left:155.20px;top:374.00px;letter-spacing:0.085px;color:#000080;">{308319B2-7CE6-01DC-0000-000000...</div>
<div class="a" style="left:19px;top:395px;width:398px;height:1px;background:#b2b2b2;"></div>
<div class="a" style="left:20px;top:395px;width:397px;height:1px;background:#fff;"></div>
<div class="a" style="left:19px;top:109px;width:1px;height:287px;background:#a0a2a6;"></div>
<div class="a" style="left:150px;top:21px;width:1px;height:67px;background:#b2b2b2;"></div>
<div class="a" style="left:150px;top:109px;width:1px;height:287px;background:#b2b2b2;"></div>
<div class="a" style="left:0px;top:396px;width:417px;height:1px;background:#8f8f8f;"></div>
<div class="box" style="left:5px;top:401px"><i></i></div>
<div class="t" style="left:24.20px;top:396.00px;letter-spacing:-0.467px;font-weight:bold;">Summary</div>
</div>
<div class="a" style="left:440px;top:159px;width:3px;height:232px;background:#7a7a7a;border-radius:2px"></div>
<div class="a" style="left:452px;top:138px;width:575px;height:408px;background:#fff;border-left:1px solid #828282;overflow:hidden">
<div class="a" style="left:0px;top:0px;width:576px;height:21px;background:#f0f0f0;"></div>
<div class="a" style="left:0px;top:0px;width:63px;height:408px;background:#f0f0f0;"></div>
<div class="a" style="left:0px;top:0px;width:2px;height:408px;background:#f9f9f9;"></div>
<div class="a" style="left:63px;top:21px;width:1px;height:390px;background:#828282;"></div>
<div class="a" style="left:62px;top:21px;width:520px;height:1px;background:#828282;"></div>
<div class="a" style="left:69px;top:0px;width:8px;height:20px;background:#a0a0a0;"></div>
<div class="a" style="left:2px;top:22px;width:60px;height:19px;background:#a0a0a0;"></div>
<div class="a" style="left:69px;top:22px;width:313px;height:19px;background:#fffaf0;"></div>
<div class="a" style="left:69px;top:41px;width:160px;height:19px;background:#fffaf0;"></div>
<div class="mono" style="left:69px;top:0.00px;"><span style="color:#fff">0</span>001 0203 0405 0607 0809 0A0B 0C0D 0E0F</div>
<div class="mono" style="left:397px;top:0.00px;letter-spacing:0.8px">0123456789ABCDEF</div>
<div class="mono" style="left:27px;top:22.00px;color:#fff">0x00</div>
<div class="mono" style="left:27px;top:40.00px;">0x10</div>
<div class="mono" style="left:69px;top:22.00px;"><span style="color:#0000ff">B219</span> <span style="color:#000080">8330</span> <span style="color:#0000ff">E67C</span> <span style="color:#000080">DC01</span> <span style="color:#0000ff">0000</span> <span style="color:#000080">0000</span> <span style="color:#0000ff">0000</span> <span style="color:#000080">0000</span></div>
<div class="mono" style="left:69px;top:40.00px;"><span style="color:#0000ff">0000</span> <span style="color:#000080">0000</span> <span style="color:#0000ff">0200</span> <span style="color:#000080">0000</span></div>
<div class="a" style="left:69px;top:22px;width:8px;height:18px;background:transparent;border:1px solid #00e0f0"></div>
<div class="mono" style="left:397px;top:22.00px;letter-spacing:0.8px">².ƒ0æ|Ü.........</div>
<div class="mono" style="left:397px;top:40.00px;letter-spacing:0.8px">........</div>
</div>
</div>
</body></html>
